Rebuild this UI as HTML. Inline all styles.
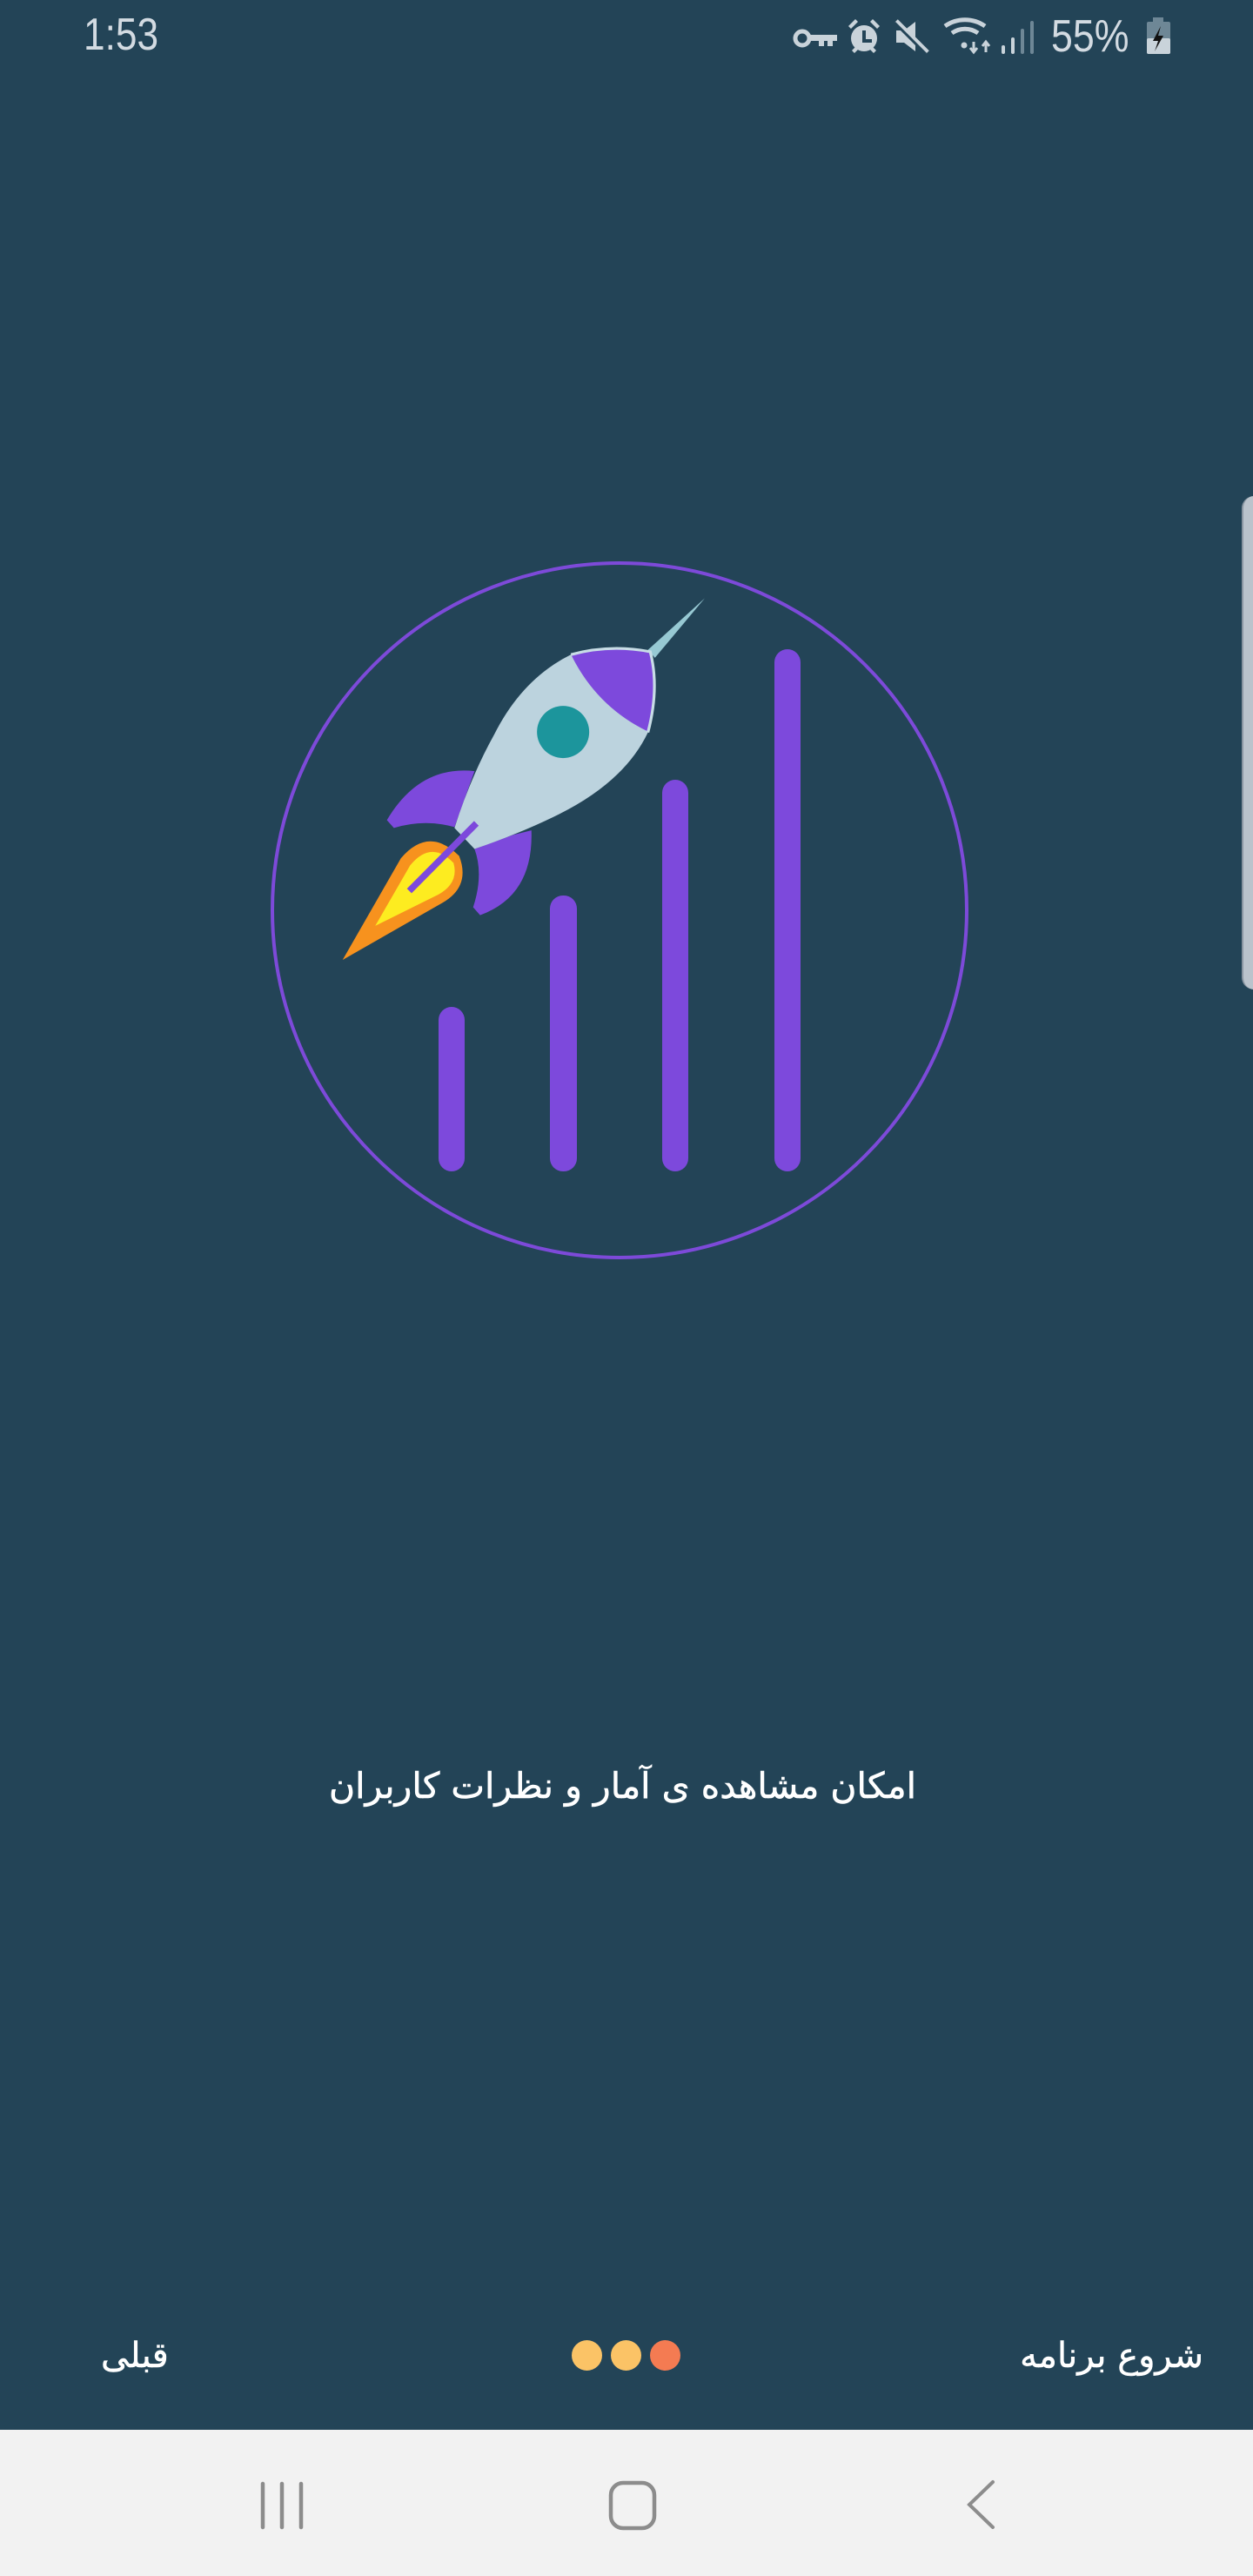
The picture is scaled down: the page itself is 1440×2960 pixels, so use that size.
<!DOCTYPE html>
<html><head><meta charset="utf-8"><style>
html,body{margin:0;padding:0}
body{width:1440px;height:2960px;background:#234457;position:relative;overflow:hidden;font-family:"Liberation Sans","DejaVu Sans",sans-serif}
.t{position:absolute;color:#fff;white-space:nowrap}
</style></head><body>
<div class="t" style="left:96px;top:10px;font-size:52px;color:#d3dbe2;transform:scaleX(0.85);transform-origin:left">1:53</div>
<div class="t" style="left:1208px;top:12px;font-size:52px;color:#d3dbe2;transform:scaleX(0.86);transform-origin:left">55%</div>
<svg width="1440" height="90" style="position:absolute;left:0;top:0" fill="#c9d3da">
<circle cx="922" cy="44" r="8" fill="none" stroke="#c9d3da" stroke-width="5"/>
<path d="M929 40h33v7h-5v6h-6v-6h-4v6h-6v-6h-12z"/>
<circle cx="993" cy="44" r="15"/>
<path d="M975 30l8-8 3 3-8 8zM1011 30l-8-8-3 3 8 8zM979 58l4-4 3 3-4 4zM1007 58l-4-4-3 3 4 4z"/>
<path d="M991 35h4v10h7v4h-11z" fill="#234457"/>
<path d="M1030 35h9l13-10v34l-13-10h-9z"/>
<path d="M1030 24l36 36" stroke="#c9d3da" stroke-width="5"/>
<path d="M1028 26l36 36" stroke="#234457" stroke-width="3"/>
<path d="M1086 30a40 40 0 0 1 46 0" fill="none" stroke="#c9d3da" stroke-width="5"/>
<path d="M1094 38a26 26 0 0 1 30 0" fill="none" stroke="#c9d3da" stroke-width="5"/>
<circle cx="1108" cy="52" r="3.5"/>
<path d="M1119 48v10M1115 55l4 5 4-5M1133 60v-10M1129 53l4-5 4 5" stroke="#c9d3da" stroke-width="3" fill="none"/>
<rect x="1151" y="52" width="4" height="10" rx="2"/>
<rect x="1162" y="43" width="4" height="19" rx="2"/>
<rect x="1173" y="33" width="4" height="29" rx="2" fill="#6e8796"/>
<rect x="1184" y="24" width="4" height="38" rx="2" fill="#6e8796"/>
<rect x="1325" y="20" width="12" height="6" fill="#6e8796"/>
<rect x="1318" y="25" width="27" height="37" rx="2" fill="#6e8796"/>
<rect x="1318" y="44" width="27" height="18" rx="2"/>
<path d="M1334 30l-9 17h6l-4 12 10-18h-6z" fill="#111"/>
</svg>

<div style="position:absolute;left:1427px;top:570px;width:20px;height:567px;background:#bac3cc;border-radius:14px 0 0 14px;border-left:2px solid #8a96a2"></div>

<svg width="1440" height="1500" style="position:absolute;left:0;top:0">
<circle cx="712" cy="1046" r="399" fill="none" stroke="#7d4ad9" stroke-width="4"/>
<g fill="#7d49dc">
<rect x="504" y="1157" width="30" height="189" rx="15"/>
<rect x="632" y="1029" width="31" height="317" rx="15"/>
<rect x="761" y="896" width="30" height="450" rx="15"/>
<rect x="890" y="746" width="30" height="600" rx="15"/>
</g>
<g transform="translate(300,630) scale(0.5357)">
<path d="M830 218L952 107L845 235Z" fill="#97c9d3"/>
<path d="M270 583L285 600Q350 580 415 598L458 478Q340 465 270 583Z" fill="#7d49dc"/>
<path d="M458 645Q478 700 455 770L470 787Q585 745 580 605L540 615Z" fill="#7d49dc"/>
<path d="M415 600Q450 490 500 400Q560 280 665 228Q750 205 835 222Q855 300 830 395Q780 500 640 570Q560 610 458 645Z" fill="#bcd3de"/>
<path d="M665 228Q750 205 835 222Q850 310 830 393Q720 340 665 228Z" fill="#7d49dc"/>
<path d="M665 228Q750 205 835 222Q855 300 830 395" fill="none" stroke="#c8dde6" stroke-width="6"/>
<circle cx="648" cy="394" r="56" fill="#1c959c"/>
<path d="M175 883L300 665Q360 595 425 660Q450 725 390 760Z" fill="#f7921e"/>
<path d="M245 810L320 680Q365 625 413 675Q425 718 380 743Z" fill="#fdec20"/>
<path d="M318 735L462 590" stroke="#7d49dc" stroke-width="14"/>
</g>
</svg>

<div class="t" style="left:383px;width:670px;top:2028px;font-size:41px;text-align:center;font-family:'DejaVu Sans',sans-serif;-webkit-text-stroke:0.6px #fff" dir="rtl">امکان مشاهده ی آمار و نظرات کاربران</div>
<div class="t" style="left:116px;top:2684px;font-size:40px;font-family:'DejaVu Sans',sans-serif;-webkit-text-stroke:0.5px #fff" dir="rtl">قبلی</div>
<div class="t" style="right:57px;top:2684px;font-size:40px;font-family:'DejaVu Sans',sans-serif;-webkit-text-stroke:0.5px #fff" dir="rtl">شروع برنامه</div>
<div style="position:absolute;left:657px;top:2689px;width:35px;height:35px;border-radius:50%;background:#fbc366"></div>
<div style="position:absolute;left:702px;top:2689px;width:35px;height:35px;border-radius:50%;background:#fbc366"></div>
<div style="position:absolute;left:747px;top:2689px;width:35px;height:35px;border-radius:50%;background:#f47b52"></div>

<div style="position:absolute;left:0;top:2792px;width:1440px;height:168px;background:#f2f2f2"></div>
<svg width="1440" height="168" style="position:absolute;left:0;top:2792px" stroke="#8c8c8c" fill="none" stroke-width="4.5" stroke-linecap="round">
<path d="M302 62v50M324 62v50M346 62v50"/>
<rect x="702" y="61" width="50" height="52" rx="14"/>
<path d="M1141 60l-27 26 27 26" stroke-width="4"/>
</svg>
</body></html>
